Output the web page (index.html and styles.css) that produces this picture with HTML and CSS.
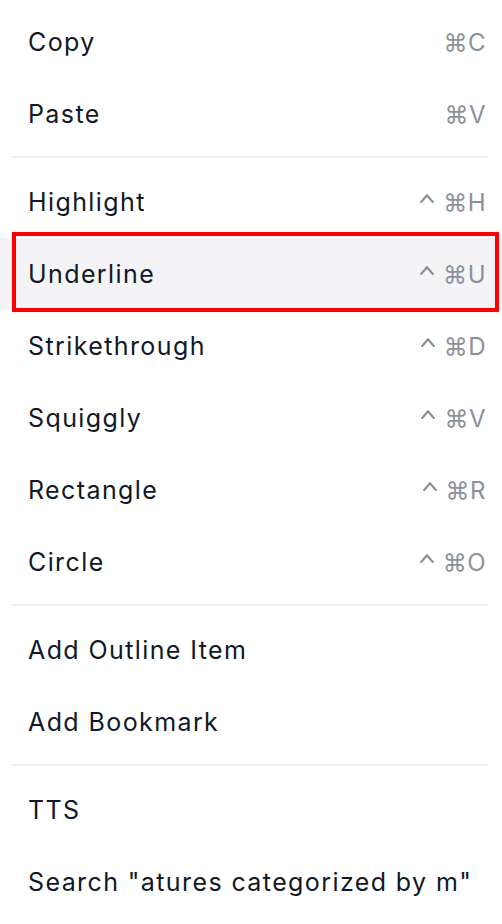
FILE: index.html
```html
<!DOCTYPE html>
<html>
<head>
<meta charset="utf-8">
<link rel="stylesheet" href="styles.css">
</head>
<body>
<div class="menu">
  <div class="item"><span class="label">Copy</span><span class="key">⌘C</span></div>
  <div class="item"><span class="label">Paste</span><span class="key">⌘V</span></div>
  <div class="sep"></div>
  <div class="item"><span class="label">Highlight</span><span class="key"><svg class="ctrl" viewBox="0 0 14 10"><polyline points="1.2,9 7,2.2 12.8,9"/></svg>⌘H</span></div>
  <div class="item active"><span class="label">Underline</span><span class="key"><svg class="ctrl" viewBox="0 0 14 10"><polyline points="1.2,9 7,2.2 12.8,9"/></svg>⌘U</span></div>
  <div class="item"><span class="label">Strikethrough</span><span class="key"><svg class="ctrl" viewBox="0 0 14 10"><polyline points="1.2,9 7,2.2 12.8,9"/></svg>⌘D</span></div>
  <div class="item"><span class="label">Squiggly</span><span class="key"><svg class="ctrl" viewBox="0 0 14 10"><polyline points="1.2,9 7,2.2 12.8,9"/></svg>⌘V</span></div>
  <div class="item"><span class="label">Rectangle</span><span class="key"><svg class="ctrl" viewBox="0 0 14 10"><polyline points="1.2,9 7,2.2 12.8,9"/></svg>⌘R</span></div>
  <div class="item"><span class="label">Circle</span><span class="key"><svg class="ctrl" viewBox="0 0 14 10"><polyline points="1.2,9 7,2.2 12.8,9"/></svg>⌘O</span></div>
  <div class="sep"></div>
  <div class="item"><span class="label">Add Outline Item</span></div>
  <div class="item"><span class="label">Add Bookmark</span></div>
  <div class="sep"></div>
  <div class="item"><span class="label">TTS</span></div>
  <div class="item"><span class="label">Search "atures categorized by m"</span></div>
  <div class="mark"></div>
</div>
</body>
</html>
```
FILE: styles.css
```css
html, body {
  margin: 0;
  padding: 0;
  background: #ffffff;
}
.menu {
  position: relative;
  padding-top: 6px;
  font-family: Inter, "Noto Sans", sans-serif;
  font-size: 25px;
  color: #111827;
}
.item {
  height: 72px;
  display: flex;
  align-items: center;
  justify-content: space-between;
  padding: 0 16px 0 28px;
}
.item.active {
  background: #f4f4f6;
}
.label {
  letter-spacing: 1.4px;
}
.key {
  color: #8c9199;
  font-size: 24px;
  letter-spacing: 0.5px;
}
.ctrl {
  width: 14px;
  height: 10px;
  margin-right: 9px;
  vertical-align: 8px;
  fill: none;
  stroke: #8c9199;
  stroke-width: 2.2;
  stroke-linecap: round;
  stroke-linejoin: round;
}
.sep {
  height: 2px;
  margin: 6px 14px 8px 11px;
  background: #efeff0;
}
.mark {
  position: absolute;
  left: 12px;
  top: 232px;
  width: 479px;
  height: 72px;
  border: 4px solid #ff0000;
}
```
